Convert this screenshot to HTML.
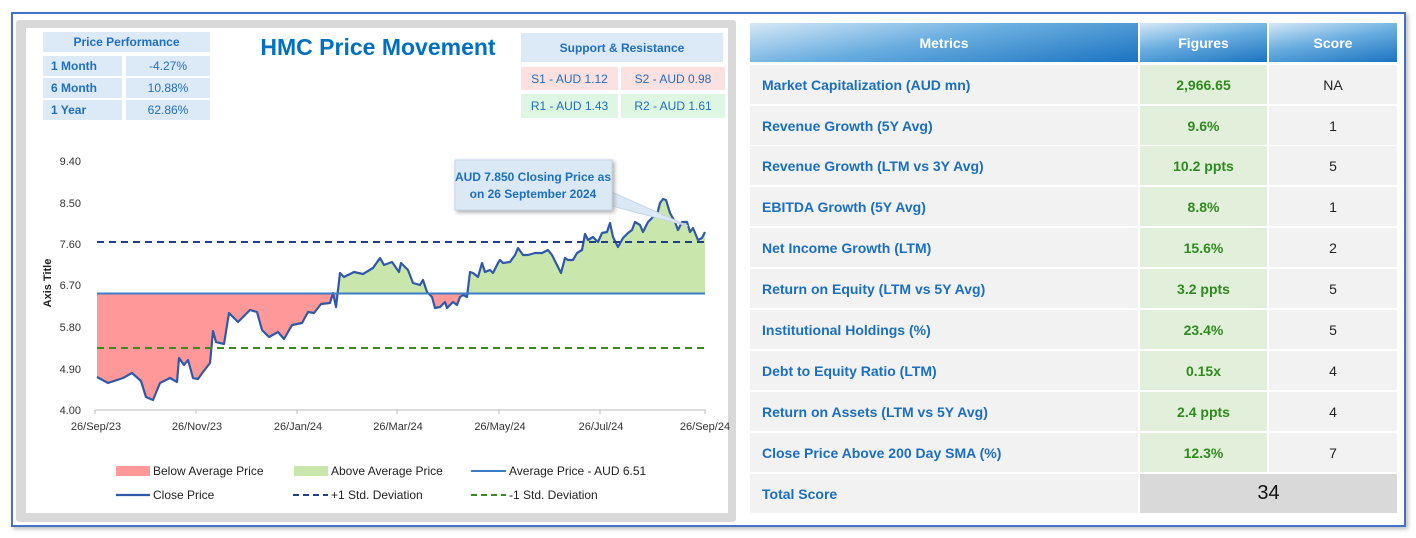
<!DOCTYPE html>
<html><head><meta charset="utf-8"><style>
*{margin:0;padding:0;box-sizing:border-box}
body{width:1416px;height:538px;background:#fff;position:relative;overflow:hidden;font-family:"Liberation Sans",Arial,sans-serif}
.a{position:absolute}
.c{display:flex;align-items:center;justify-content:center}
.pp{background:#dce9f6;color:#1f6fbf;font-size:12px}
.mt{position:absolute;left:750px;width:388px;background:#f2f2f2;color:#1b6fc0;font-weight:bold;font-size:14px;padding-left:12px;display:flex;align-items:center;height:39px}
.fg{position:absolute;left:1140px;width:127px;background:#e2efda;color:#2e8b1e;font-weight:bold;font-size:14px;height:39px}
.sc{position:absolute;left:1269px;width:128px;background:#f2f2f2;color:#222;font-size:14px;height:39px}
</style></head><body>
<div class="a" style="left:11px;top:12px;width:1395px;height:515px;border:2px solid #4472c4;box-shadow:2px 2px 4px #bbb"></div>
<div class="a" style="left:16px;top:20px;width:720px;height:502px;background:#d9d9d9;border-radius:3px"></div>
<div class="a" style="left:26px;top:28px;width:702px;height:485px;background:#fff"></div>

<div class="a c pp" style="left:43px;top:32px;width:167px;height:20px;font-weight:bold">Price Performance</div>
<div class="a pp" style="left:43px;top:56px;width:79px;height:20px;font-weight:bold;padding:3px 0 0 8px">1 Month</div>
<div class="a c pp" style="left:126px;top:56px;width:84px;height:20px">-4.27%</div>
<div class="a pp" style="left:43px;top:78px;width:79px;height:20px;font-weight:bold;padding:3px 0 0 8px">6 Month</div>
<div class="a c pp" style="left:126px;top:78px;width:84px;height:20px">10.88%</div>
<div class="a pp" style="left:43px;top:100px;width:79px;height:20px;font-weight:bold;padding:3px 0 0 8px">1 Year</div>
<div class="a c pp" style="left:126px;top:100px;width:84px;height:20px">62.86%</div>

<div class="a c" style="left:230px;top:32px;width:296px;height:30px;color:#0070c0;font-weight:bold;font-size:23px">HMC Price Movement</div>

<div class="a c pp" style="left:521px;top:33px;width:202px;height:29px;font-weight:bold">Support &amp; Resistance</div>
<div class="a c" style="left:521px;top:67px;width:97px;height:23px;background:#fde0e0;color:#1f6fbf;font-size:12px">S1 - AUD 1.12</div>
<div class="a c" style="left:621px;top:67px;width:104px;height:23px;background:#fde0e0;color:#1f6fbf;font-size:12px">S2 - AUD 0.98</div>
<div class="a c" style="left:521px;top:94px;width:97px;height:24px;background:#ddf7e3;color:#1f6fbf;font-size:12px">R1 - AUD 1.43</div>
<div class="a c" style="left:621px;top:94px;width:104px;height:24px;background:#ddf7e3;color:#1f6fbf;font-size:12px">R2 - AUD 1.61</div>

<svg class="a" style="left:0;top:0" width="740" height="538">
<defs>
<clipPath id="up"><rect x="0" y="0" width="740" height="293.5"/></clipPath>
<clipPath id="dn"><rect x="0" y="293.5" width="740" height="200"/></clipPath>
</defs>
<g font-size="11" fill="#333" text-anchor="end">
<text x="81" y="165">9.40</text><text x="81" y="207">8.50</text><text x="81" y="248">7.60</text><text x="81" y="289">6.70</text><text x="81" y="331">5.80</text><text x="81" y="373">4.90</text><text x="81" y="414">4.00</text>
</g>
<text transform="translate(51,283) rotate(-90)" font-size="11" font-weight="bold" text-anchor="middle" fill="#222">Axis Title</text>
<line x1="95" y1="410" x2="706" y2="410" stroke="#bbb"/>
<g stroke="#bbb"><line x1="95" y1="410" x2="95" y2="414"/><line x1="196" y1="410" x2="196" y2="414"/><line x1="297" y1="410" x2="297" y2="414"/><line x1="397" y1="410" x2="397" y2="414"/><line x1="499" y1="410" x2="499" y2="414"/><line x1="600" y1="410" x2="600" y2="414"/><line x1="705" y1="410" x2="705" y2="414"/></g>
<g font-size="11" fill="#333" text-anchor="middle">
<text x="96" y="430">26/Sep/23</text><text x="197" y="430">26/Nov/23</text><text x="298" y="430">26/Jan/24</text><text x="398" y="430">26/Mar/24</text><text x="500" y="430">26/May/24</text><text x="601" y="430">26/Jul/24</text><text x="705" y="430">26/Sep/24</text>
</g>
<path d="M97,293.5 L97,377 108,383 123,378 132,373 141,381 146,397 153,400 160,383 170,378 177,382 179,358 184,365 188,360 193,378 198,379 203,372 210,363 213,331 216,342 224,344 229,313 238,322 250,310 257,312 262,330 269,337 278,332 284,339 292,325 302,323 308,312 314,313 321,304 330,303 333,293 336,307 340,273 344,277 354,272 363,274 373,268 380,258 384,265 392,262 399,272 401,263 408,270 413,283 420,285 423,280 427,292 432,297 435,308 440,307 445,302 447,308 453,302 457,305 460,297 463,295 467,297 470,272 473,273 478,277 482,263 485,272 490,270 493,273 498,263 500,260 503,263 510,262 515,255 518,248 523,255 528,255 535,253 542,253 548,250 552,255 557,265 561,273 565,258 568,260 573,260 577,253 582,250 585,234 588,240 593,237 598,242 602,233 607,232 610,223 613,237 618,247 623,238 628,233 632,230 635,222 640,225 643,232 648,222 653,217 657,215 660,203 663,199 666,200 670,213 675,222 678,230 682,222 687,222 690,232 693,228 698,240 702,238 705,232 L705,293.5 Z" fill="#c9e6ad" clip-path="url(#up)"/>
<path d="M97,293.5 L97,377 108,383 123,378 132,373 141,381 146,397 153,400 160,383 170,378 177,382 179,358 184,365 188,360 193,378 198,379 203,372 210,363 213,331 216,342 224,344 229,313 238,322 250,310 257,312 262,330 269,337 278,332 284,339 292,325 302,323 308,312 314,313 321,304 330,303 333,293 336,307 340,273 344,277 354,272 363,274 373,268 380,258 384,265 392,262 399,272 401,263 408,270 413,283 420,285 423,280 427,292 432,297 435,308 440,307 445,302 447,308 453,302 457,305 460,297 463,295 467,297 470,272 473,273 478,277 482,263 485,272 490,270 493,273 498,263 500,260 503,263 510,262 515,255 518,248 523,255 528,255 535,253 542,253 548,250 552,255 557,265 561,273 565,258 568,260 573,260 577,253 582,250 585,234 588,240 593,237 598,242 602,233 607,232 610,223 613,237 618,247 623,238 628,233 632,230 635,222 640,225 643,232 648,222 653,217 657,215 660,203 663,199 666,200 670,213 675,222 678,230 682,222 687,222 690,232 693,228 698,240 702,238 705,232 L705,293.5 Z" fill="#ff9999" clip-path="url(#dn)"/>
<path d="M97,377 108,383 123,378 132,373 141,381 146,397 153,400 160,383 170,378 177,382 179,358 184,365 188,360 193,378 198,379 203,372 210,363 213,331 216,342 224,344 229,313 238,322 250,310 257,312 262,330 269,337 278,332 284,339 292,325 302,323 308,312 314,313 321,304 330,303 333,293 336,307 340,273 344,277 354,272 363,274 373,268 380,258 384,265 392,262 399,272 401,263 408,270 413,283 420,285 423,280 427,292 432,297 435,308 440,307 445,302 447,308 453,302 457,305 460,297 463,295 467,297 470,272 473,273 478,277 482,263 485,272 490,270 493,273 498,263 500,260 503,263 510,262 515,255 518,248 523,255 528,255 535,253 542,253 548,250 552,255 557,265 561,273 565,258 568,260 573,260 577,253 582,250 585,234 588,240 593,237 598,242 602,233 607,232 610,223 613,237 618,247 623,238 628,233 632,230 635,222 640,225 643,232 648,222 653,217 657,215 660,203 663,199 666,200 670,213 675,222 678,230 682,222 687,222 690,232 693,228 698,240 702,238 705,232" fill="none" stroke="#2f59a8" stroke-width="2.2" stroke-linejoin="round"/>
<line x1="97" y1="293.5" x2="705" y2="293.5" stroke="#3b7cc4" stroke-width="2"/>
<line x1="97" y1="242" x2="705" y2="242" stroke="#1f3f87" stroke-width="2" stroke-dasharray="7,5"/>
<line x1="97" y1="348" x2="705" y2="348" stroke="#3a8a1c" stroke-width="2" stroke-dasharray="7,5"/>
<polygon points="612,192 612,206 688,226" fill="#dbe8f5" stroke="#c5d6e8"/>
<rect x="455" y="160" width="157" height="50" fill="#dbe8f5" stroke="#c5d6e8" style="filter:drop-shadow(2px 2px 2px #aaa)"/>
<text x="533" y="181" font-size="12" font-weight="bold" fill="#1b6fc0" text-anchor="middle">AUD 7.850 Closing Price as</text>
<text x="533" y="198" font-size="12" font-weight="bold" fill="#1b6fc0" text-anchor="middle">on 26 September 2024</text>
<rect x="116" y="466" width="34" height="10" fill="#ff9999"/>
<rect x="294" y="466" width="34" height="10" fill="#c9e6ad"/>
<line x1="471" y1="471" x2="506" y2="471" stroke="#3b7cc4" stroke-width="2"/>
<line x1="116" y1="495" x2="150" y2="495" stroke="#2f59a8" stroke-width="2.2"/>
<line x1="293" y1="495" x2="328" y2="495" stroke="#1f3f87" stroke-width="2" stroke-dasharray="6,4"/>
<line x1="471" y1="495" x2="506" y2="495" stroke="#3a8a1c" stroke-width="2" stroke-dasharray="6,4"/>
<g font-size="12" fill="#222">
<text x="153" y="475">Below Average Price</text><text x="331" y="475">Above Average Price</text><text x="509" y="475">Average Price - AUD 6.51</text>
<text x="153" y="499">Close Price</text><text x="331" y="499">+1 Std. Deviation</text><text x="509" y="499">-1 Std. Deviation</text>
</g>
</svg>

<div class="a c" style="left:750px;top:23px;width:388px;height:39px;background:linear-gradient(170deg,#d6e8f7 0%,#6aaee0 45%,#1a73c0 100%);color:#fff;font-weight:bold;font-size:14px">Metrics</div>
<div class="a c" style="left:1140px;top:23px;width:127px;height:39px;background:linear-gradient(170deg,#d6e8f7 0%,#6aaee0 45%,#1a73c0 100%);color:#fff;font-weight:bold;font-size:14px">Figures</div>
<div class="a c" style="left:1269px;top:23px;width:128px;height:39px;background:linear-gradient(170deg,#d6e8f7 0%,#6aaee0 45%,#1a73c0 100%);color:#fff;font-weight:bold;font-size:14px">Score</div>

<div class="mt" style="top:65px">Market Capitalization (AUD mn)</div><div class="fg c" style="top:65px">2,966.65</div><div class="sc c" style="top:65px">NA</div>
<div class="mt" style="top:106px">Revenue Growth (5Y Avg)</div><div class="fg c" style="top:106px">9.6%</div><div class="sc c" style="top:106px">1</div>
<div class="mt" style="top:146px">Revenue Growth (LTM vs 3Y Avg)</div><div class="fg c" style="top:146px">10.2 ppts</div><div class="sc c" style="top:146px">5</div>
<div class="mt" style="top:187px">EBITDA Growth (5Y Avg)</div><div class="fg c" style="top:187px">8.8%</div><div class="sc c" style="top:187px">1</div>
<div class="mt" style="top:228px">Net Income Growth (LTM)</div><div class="fg c" style="top:228px">15.6%</div><div class="sc c" style="top:228px">2</div>
<div class="mt" style="top:269px">Return on Equity (LTM vs 5Y Avg)</div><div class="fg c" style="top:269px">3.2 ppts</div><div class="sc c" style="top:269px">5</div>
<div class="mt" style="top:310px">Institutional Holdings (%)</div><div class="fg c" style="top:310px">23.4%</div><div class="sc c" style="top:310px">5</div>
<div class="mt" style="top:351px">Debt to Equity Ratio (LTM)</div><div class="fg c" style="top:351px">0.15x</div><div class="sc c" style="top:351px">4</div>
<div class="mt" style="top:392px">Return on Assets (LTM vs 5Y Avg)</div><div class="fg c" style="top:392px">2.4 ppts</div><div class="sc c" style="top:392px">4</div>
<div class="mt" style="top:433px">Close Price Above 200 Day SMA (%)</div><div class="fg c" style="top:433px">12.3%</div><div class="sc c" style="top:433px">7</div>
<div class="mt" style="top:474px">Total Score</div>
<div class="a c" style="left:1140px;top:474px;width:257px;height:39px;background:#d9d9d9;color:#111;font-size:20px">34</div>
</body></html>
